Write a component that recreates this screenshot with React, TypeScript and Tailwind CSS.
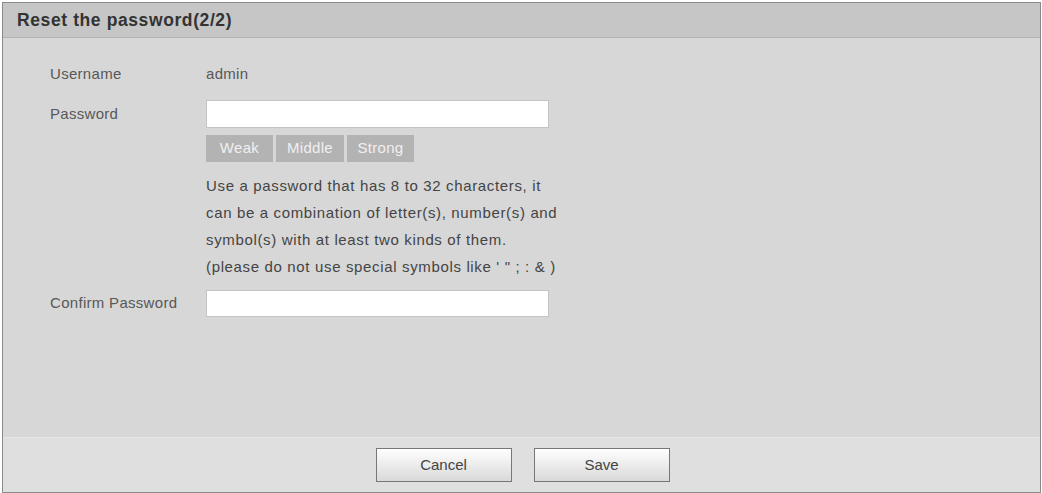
export default function App() {
  const font = { fontFamily: '"Liberation Sans", Arial, sans-serif' };
  return (
    <div className="w-[1042px] h-[493px] bg-white pt-[2px] pl-[2px]" style={font}>
      <div className="w-[1039px] h-[491px] border border-[#8a8a8a] flex flex-col bg-[#d7d7d7]">
        {/* Header */}
        <div className="h-[35px] bg-[#c6c6c6] border-b border-[#b3b3b3] flex items-center pl-[14px]">
          <span className="text-[17.5px] font-bold text-[#333] tracking-[0.6px]">Reset the password(2/2)</span>
        </div>

        {/* Form body */}
        <div className="flex-1 pt-[26px] pl-[47px] text-[15px] text-[#585858] tracking-[0.3px]">
          <div className="flex items-center h-[20px]">
            <div className="w-[156px]">Username</div>
            <div>admin</div>
          </div>
          <div className="flex mt-[16px]">
            <div className="w-[156px] h-[28px] flex items-center">Password</div>
            <div className="flex flex-col">
              <input className="w-[343px] h-[28px] bg-white border border-[#c4c4c4] outline-none" />
              <div className="flex mt-[7px] h-[27px] text-[15px] text-[#f0f0f0] tracking-[0.3px]">
                <div className="w-[67px] bg-[#b3b3b3] flex items-center justify-center">Weak</div>
                <div className="w-[68px] ml-[3px] bg-[#b3b3b3] flex items-center justify-center">Middle</div>
                <div className="w-[67px] ml-[3px] bg-[#b3b3b3] flex items-center justify-center">Strong</div>
              </div>
              <div className="mt-[10px] leading-[27px] text-[15px] text-[#444] tracking-[0.65px]">
                <div>Use a password that has 8 to 32 characters, it</div>
                <div>can be a combination of letter(s), number(s) and</div>
                <div>symbol(s) with at least two kinds of them.</div>
                <div>(please do not use special symbols like &#39; &quot; ; : &amp; )</div>
              </div>
            </div>
          </div>
          <div className="flex items-center mt-[10px]">
            <div className="w-[156px]">Confirm Password</div>
            <input className="w-[343px] h-[27px] bg-white border border-[#c4c4c4] outline-none" />
          </div>
        </div>

        {/* Footer */}
        <div className="h-[55px] bg-[#dfdfdf] border-t border-[#e6e6e6] flex justify-center items-start pt-[10px] gap-[22px] pl-[2px]">
          <button className="w-[136px] h-[34px] border border-[#777] bg-gradient-to-b from-[#ffffff] to-[#d9d9d9] text-[15px] text-[#444]">
            Cancel
          </button>
          <button className="w-[136px] h-[34px] border border-[#777] bg-gradient-to-b from-[#ffffff] to-[#d9d9d9] text-[15px] text-[#444]">
            Save
          </button>
        </div>
      </div>
    </div>
  );
}
